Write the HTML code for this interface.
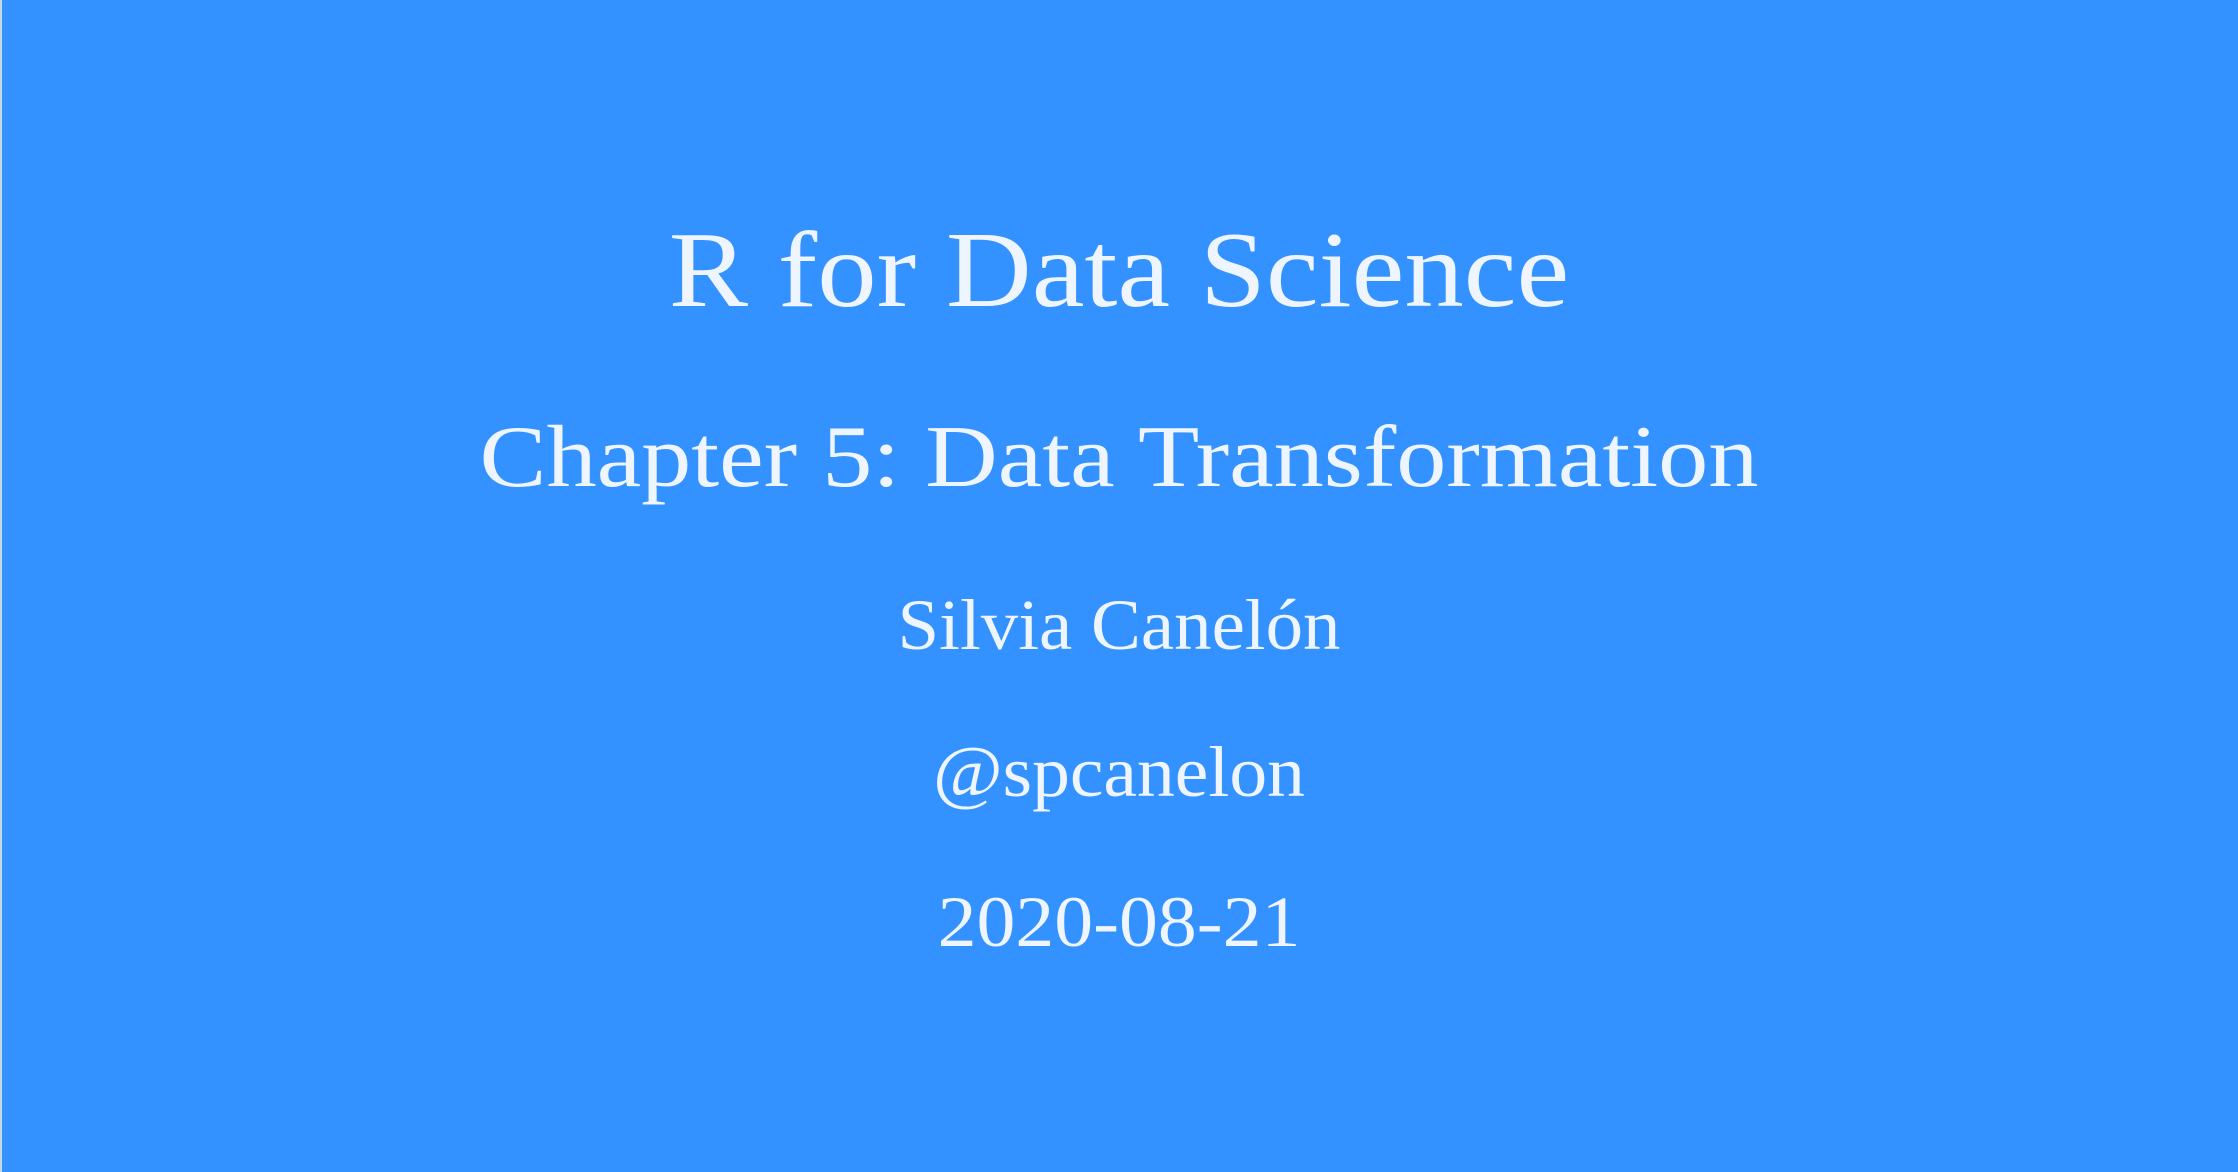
<!DOCTYPE html>
<html><head><meta charset="utf-8"><style>
html,body{margin:0;padding:0}
body{width:2238px;height:1172px;background:#3392ff;position:relative;overflow:hidden;font-family:"Liberation Serif",serif;color:#eef5ff}
.edge{position:absolute;left:0;top:0;width:2px;height:1172px;background:#c9d6e6}
.t{position:absolute;left:0;width:2238px;text-align:center;white-space:nowrap;transform-origin:1119px 50%}
</style></head><body>
<div class="edge"></div>
<div class="t" style="top:217px;font-size:108px;line-height:108px;transform:scaleX(1.10)">R for Data Science</div>
<div class="t" style="top:414px;font-size:88px;line-height:88px;transform:scaleX(1.14)">Chapter 5: Data Transformation</div>
<div class="t" style="top:589px;font-size:72px;line-height:72px;transform:scaleX(1.04)">Silvia Canelón</div>
<div class="t" style="top:736px;font-size:72px;line-height:72px;transform:scaleX(1.05)">@spcanelon</div>
<div class="t" style="top:886px;font-size:72px;line-height:72px;transform:scaleX(1.08)">2020-08-21</div>
</body></html>
